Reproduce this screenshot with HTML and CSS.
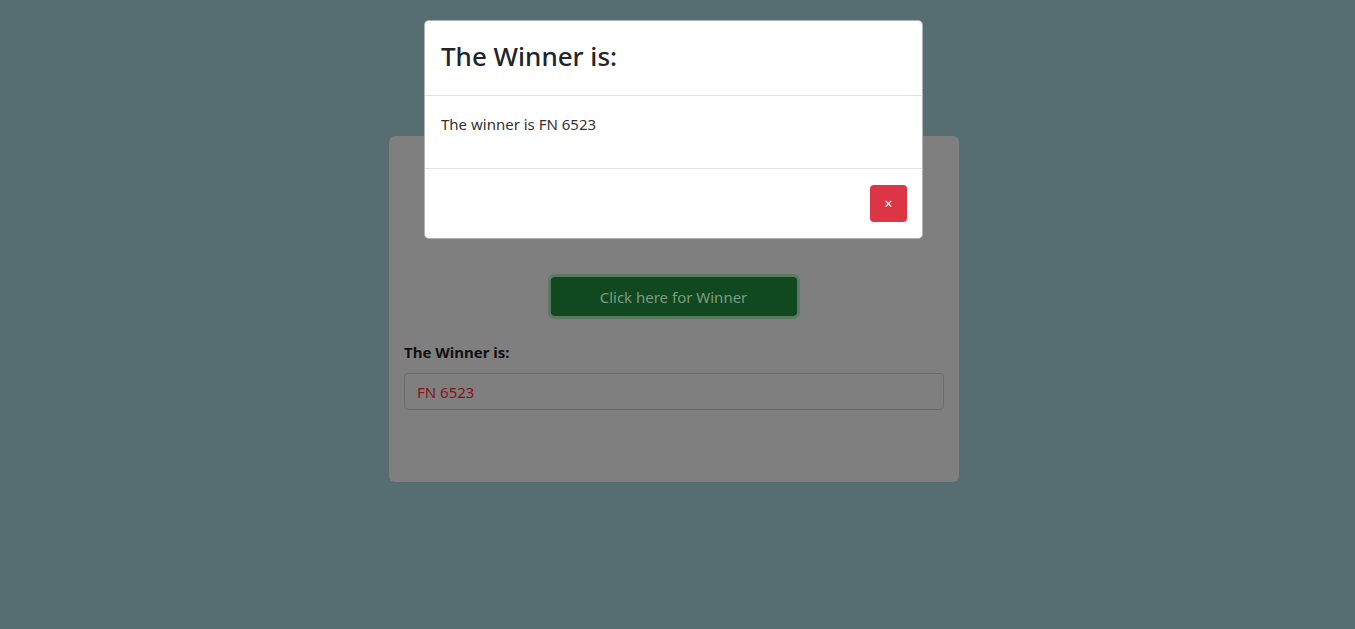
FILE: index.html
```html
<!DOCTYPE html>
<html lang="en">
<head>
<meta charset="utf-8">
<title>Winner</title>
<link rel="stylesheet" href="styles.css">
</head>
<body>
<main class="page">
  <section class="card">
    <div class="card-top"></div>
    <div class="action">
      <button class="btn-winner" type="button">Click here for Winner</button>
    </div>
    <label class="field-label" for="winner">The Winner is:</label>
    <input id="winner" class="field" type="text" value="FN 6523" readonly>
  </section>
</main>
<div class="modal" role="dialog">
  <div class="modal-header">
    <h3 class="modal-title">The Winner is:</h3>
  </div>
  <div class="modal-body">
    <p>The winner is FN 6523</p>
  </div>
  <div class="modal-footer">
    <button class="btn-close" type="button">×</button>
  </div>
</div>
</body>
</html>
```

FILE: styles.css
```css
* { box-sizing: border-box; }
html, body { margin: 0; height: 100%; }
body {
  background: #566d72;
  font-family: "Noto Sans", "Segoe UI", sans-serif;
  font-size: 16px;
  color: #212529;
  position: relative;
}
.page {
  display: flex;
  justify-content: center;
  padding-top: 136px;
}
.card {
  width: 570px;
  height: 346px;
  margin-left: -7px;
  background: #7f7f7f;
  border-radius: 6px;
  padding: 0 15px;
  display: flex;
  flex-direction: column;
}
.card-top { height: 141px; flex: none; }
.action { display: flex; justify-content: center; margin-left: -1px; }
.btn-winner {
  width: 246px;
  height: 39px;
  border: none;
  border-radius: 4px;
  background: #10491f;
  color: #7d9a82;
  font-family: inherit;
  font-size: 15px;
  box-shadow: 0 0 0 3px #5b7a60;
}
.field-label {
  margin-top: 26px;
  font-weight: 700;
  font-size: 15px;
  color: #111;
  line-height: 20px;
}
.field {
  margin-top: 11px;
  width: 540px;
  height: 37px;
  border: 1px solid #6b6b6b;
  border-radius: 4px;
  background: #7f7f7f;
  color: #821616;
  font-family: inherit;
  font-size: 15px;
  padding: 0 12px;
  outline: none;
}
.modal {
  position: absolute;
  top: 20px;
  left: 424px;
  width: 499px;
  background: #fff;
  border: 1px solid rgba(0,0,0,0.3);
  border-radius: 5px;
}
.modal-header {
  height: 75px;
  padding: 0 16px 5px;
  display: flex;
  align-items: center;
  border-bottom: 1px solid #dee2e6;
}
.modal-title {
  margin: 0;
  font-size: 26px;
  font-weight: 500;
  color: #212529;
}
.modal-body {
  padding: 16px 16px;
  border-bottom: 1px solid #dee2e6;
}
.modal-body p {
  margin: 0 0 16px;
  line-height: 24px;
  font-size: 15px;
  color: #333;
}
.modal-footer {
  display: flex;
  justify-content: flex-end;
  padding: 16px 15px 16px;
}
.btn-close {
  width: 37px;
  height: 37px;
  border: none;
  border-radius: 4px;
  background: #dc3545;
  color: #fff;
  font-family: inherit;
  font-size: 14px;
  padding: 0;
}
```
